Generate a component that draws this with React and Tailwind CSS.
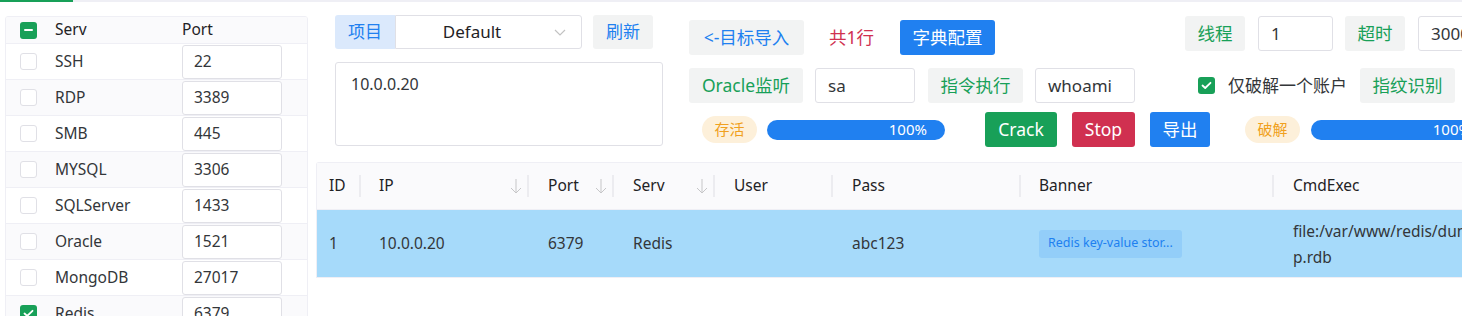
import React from 'react';

const services = [
  { name: 'SSH', port: '22' },
  { name: 'RDP', port: '3389' },
  { name: 'SMB', port: '445' },
  { name: 'MYSQL', port: '3306' },
  { name: 'SQLServer', port: '1433' },
  { name: 'Oracle', port: '1521' },
  { name: 'MongoDB', port: '27017' },
  { name: 'Redis', port: '6379', checked: true },
];

const CheckIcon = () => (
  <svg width="11" height="9" viewBox="0 0 11 9" fill="none">
    <polyline points="1.5,4.5 4.2,7 9.5,1.8" stroke="white" strokeWidth="1.8" strokeLinecap="round" strokeLinejoin="round" />
  </svg>
);

const Box = ({ checked, minus }) => {
  if (checked || minus) {
    return (
      <div className="w-[17px] h-[17px] rounded-[3px] bg-[#18a058] flex items-center justify-center shrink-0">
        {minus ? <div className="w-[9px] h-[2px] bg-white rounded-full" /> : <CheckIcon />}
      </div>
    );
  }
  return <div className="w-[17px] h-[17px] rounded-[3px] border border-[#e0e0e6] bg-white shrink-0" />;
};

const SortArrow = () => (
  <svg width="12" height="16" viewBox="0 0 12 16" fill="none">
    <line x1="6" y1="1" x2="6" y2="15" stroke="#c6c6c8" strokeWidth="1" />
    <polyline points="1,10 6,15 11,10" stroke="#c6c6c8" strokeWidth="1" fill="none" />
  </svg>
);

const columns = [
  { title: 'ID', w: 'w-[44px]', pl: 'pl-[12px]' },
  { title: 'IP', w: 'w-[168px]', pl: 'pl-[18px]', sort: true },
  { title: 'Port', w: 'w-[85px]', pl: 'pl-[19px]', sort: true },
  { title: 'Serv', w: 'w-[101px]', pl: 'pl-[19px]', sort: true },
  { title: 'User', w: 'w-[118px]', pl: 'pl-[19px]' },
  { title: 'Pass', w: 'w-[188px]', pl: 'pl-[19px]' },
  { title: 'Banner', w: 'w-[253px]', pl: 'pl-[18px]' },
  { title: 'CmdExec', w: 'w-[240px]', pl: 'pl-[19px]', last: true },
];

const Progress = ({ className }) => (
  <div className={`h-[20px] w-[178px] rounded-full bg-[#2080f0] flex items-center justify-end pr-[18px] shrink-0 ${className}`}>
    <span className="text-white text-[15px] leading-none">100%</span>
  </div>
);

export default function App() {
  return (
    <div className="w-[1462px] h-[316px] overflow-hidden bg-white text-[#333639] font-['Noto_Sans','Noto_Sans_CJK_SC',sans-serif] text-[17px]">
      {/* tab line */}
      <div className="flex h-[2px]">
        <div className="w-[73px] bg-[#18a058]" />
        <div className="flex-1 bg-[#efeff5]" />
      </div>

      <div className="flex items-start">
        {/* service table */}
        <div className="ml-[5px] mt-[14px] w-[303px] border border-[#efeff5] rounded-[3px] overflow-hidden shrink-0 text-[15.5px]">
          <div className="h-[27px] bg-[#fafafc] flex items-center border-b border-[#efeff5]">
            <div className="pl-[14px]"><Box minus /></div>
            <span className="ml-[18px] w-[127px] text-[#1f2225]">Serv</span>
            <span className="text-[#1f2225]">Port</span>
          </div>
          {services.map((s, i) => (
            <div
              key={s.name}
              className={`h-[36px] flex items-center border-b border-[#efeff5] ${i % 2 === 1 ? 'bg-[#fafafc]' : 'bg-white'}`}
            >
              <div className="pl-[14px]"><Box checked={s.checked} /></div>
              <span className="ml-[18px] w-[127px]">{s.name}</span>
              <div className="w-[100px] h-[34px] border border-[#e0e0e6] rounded-[3px] bg-white flex items-center pl-[11px]">
                {s.port}
              </div>
            </div>
          ))}
        </div>

        {/* right area */}
        <div className="ml-[8px] flex-1 flex flex-col">
          <div className="flex items-start pl-[19px]">
            {/* column A */}
            <div className="w-[328px] mt-[13px] shrink-0">
              <div className="flex items-center">
                <div className="h-[34px] w-[60px] rounded-l-[3px] bg-[#dbe9fc] text-[#2080f0] flex items-center justify-center">项目</div>
                <div className="h-[34px] w-[187px] border border-[#e0e0e6] rounded-r-[3px] flex items-center relative">
                  <span className="flex-1 text-center pr-[6px] text-[#1f2225]">Default</span>
                  <svg className="mr-[15px]" width="12" height="7" viewBox="0 0 12 7" fill="none">
                    <polyline points="1,1 6,6 11,1" stroke="#c2c2c2" strokeWidth="1.2" />
                  </svg>
                </div>
                <div className="ml-[11px] h-[34px] w-[60px] rounded-[3px] bg-[#f2f3f3] text-[#2080f0] flex items-center justify-center">刷新</div>
              </div>
              <div className="mt-[13px] h-[84px] border border-[#e0e0e6] rounded-[3px] px-[15px] pt-[9px] text-[16px]">10.0.0.20</div>
            </div>

            {/* columns B + C */}
            <div className="ml-[26px] flex flex-col">
              <div className="flex items-start mt-[14px]">
                <div className="mt-[4px] flex items-center">
                  <div className="h-[35px] w-[115px] rounded-[3px] bg-[#f2f3f3] text-[#2080f0] flex items-center justify-center text-[17.5px]">&lt;-目标导入</div>
                  <span className="ml-[25px] w-[46px] text-[#d03050] text-[17.5px]">共1行</span>
                  <div className="ml-[25px] h-[35px] w-[95px] rounded-[3px] bg-[#2080f0] text-white flex items-center justify-center text-[17.5px]">字典配置</div>
                </div>
                <div className="ml-[190px] flex items-center">
                  <div className="h-[35px] w-[60px] rounded-[3px] bg-[#f2f3f3] text-[#18a058] flex items-center justify-center text-[17.5px]">线程</div>
                  <div className="ml-[13px] h-[35px] w-[75px] border border-[#e0e0e6] rounded-[3px] flex items-center pl-[12px]">1</div>
                  <div className="ml-[12px] h-[35px] w-[60px] rounded-[3px] bg-[#f2f3f3] text-[#18a058] flex items-center justify-center text-[17.5px]">超时</div>
                  <div className="ml-[13px] h-[35px] w-[90px] border border-[#e0e0e6] rounded-[3px] flex items-center pl-[12px] shrink-0">3000</div>
                </div>
              </div>

              <div className="flex items-center mt-[13px]">
                <div className="h-[35px] w-[114px] rounded-[3px] bg-[#f2f3f3] text-[#18a058] flex items-center justify-center text-[17.5px]">Oracle监听</div>
                <div className="ml-[12px] h-[35px] w-[100px] border border-[#e0e0e6] rounded-[3px] flex items-center pl-[12px]">sa</div>
                <div className="ml-[13px] h-[35px] w-[95px] rounded-[3px] bg-[#f2f3f3] text-[#18a058] flex items-center justify-center text-[17.5px]">指令执行</div>
                <div className="ml-[12px] h-[35px] w-[100px] border border-[#e0e0e6] rounded-[3px] flex items-center pl-[12px]">whoami</div>
                <div className="ml-[63px] flex items-center">
                  <Box checked />
                  <span className="ml-[13px] w-[119px]">仅破解一个账户</span>
                </div>
                <div className="ml-[13px] h-[35px] w-[95px] rounded-[3px] bg-[#f2f3f3] text-[#18a058] flex items-center justify-center text-[17.5px]">指纹识别</div>
              </div>

              <div className="flex items-center mt-[9px] h-[35px]">
                <div className="ml-[13px] h-[27px] w-[55px] rounded-full bg-[#fdf0da] text-[#f0a020] text-[15px] flex items-center justify-center shrink-0">存活</div>
                <Progress className="ml-[10px]" />
                <div className="ml-[40px] h-[35px] w-[72px] rounded-[3px] bg-[#18a058] text-white flex items-center justify-center text-[17.5px]">Crack</div>
                <div className="ml-[15px] h-[35px] w-[63px] rounded-[3px] bg-[#d03050] text-white flex items-center justify-center text-[17.5px]">Stop</div>
                <div className="ml-[15px] h-[35px] w-[60px] rounded-[3px] bg-[#2080f0] text-white flex items-center justify-center text-[17.5px]">导出</div>
                <div className="ml-[35px] h-[27px] w-[55px] rounded-full bg-[#fdf0da] text-[#f0a020] text-[15px] flex items-center justify-center shrink-0">破解</div>
                <Progress className="ml-[11px]" />
              </div>
            </div>
          </div>

          {/* result table */}
          <div className="mt-[15px] border-t border-l border-[#efeff5] rounded-tl-[3px] text-[15.5px]">
            <div className="h-[47px] bg-[#fafafc] flex border-b border-[#efeff5]">
              {columns.map((c) => (
                <div key={c.title} className={`${c.w} ${c.pl} shrink-0 flex items-center relative text-[#1f2225]`}>
                  <span className="flex-1">{c.title}</span>
                  {c.sort && <span className="mr-[5px] flex items-center"><SortArrow /></span>}
                  {!c.last && <div className="w-[2px] h-[22px] bg-[#ececf0]" />}
                </div>
              ))}
            </div>
            <div className="h-[68px] bg-[#a6dafa] flex border-b border-[#efeff5]">
              <div className="w-[44px] pl-[12px] shrink-0 flex items-center">1</div>
              <div className="w-[168px] pl-[18px] shrink-0 flex items-center">10.0.0.20</div>
              <div className="w-[85px] pl-[19px] shrink-0 flex items-center">6379</div>
              <div className="w-[101px] pl-[19px] shrink-0 flex items-center">Redis</div>
              <div className="w-[118px] pl-[19px] shrink-0 flex items-center"></div>
              <div className="w-[188px] pl-[19px] shrink-0 flex items-center">abc123</div>
              <div className="w-[253px] pl-[18px] shrink-0 flex items-center">
                <div className="h-[28px] px-[9px] rounded-[3px] bg-[#93cef9] text-[#2080f0] text-[12.5px] flex items-center whitespace-nowrap">
                  Redis key-value stor...
                </div>
              </div>
              <div className="w-[240px] pl-[19px] shrink-0 flex items-center whitespace-nowrap leading-[26px] text-[15.5px]">
                <div>file:/var/www/redis/dum<br />p.rdb</div>
              </div>
            </div>
          </div>
        </div>
      </div>
    </div>
  );
}
